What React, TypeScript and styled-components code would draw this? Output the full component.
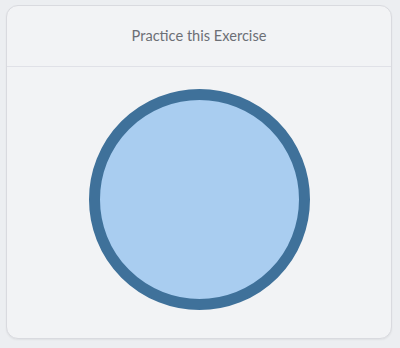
import React from "react";
import styled, { createGlobalStyle } from "styled-components";

const GlobalStyle = createGlobalStyle`
  html, body {
    margin: 0;
    padding: 0;
    background: #eceef1;
  }
  * {
    box-sizing: border-box;
  }
`;

const Page = styled.div`
  width: 400px;
  height: 348px;
  padding: 5px 8px 9px 6px;
`;

const Card = styled.div`
  height: 100%;
  display: flex;
  flex-direction: column;
  background: #f2f3f5;
  border: 1px solid #d9dadf;
  border-radius: 12px;
  box-shadow: 0 1px 2px rgba(0, 0, 0, 0.06);
`;

const Header = styled.div`
  height: 61px;
  display: flex;
  align-items: center;
  justify-content: center;
  border-bottom: 1px solid #e0e1e7;
`;

const Title = styled.h2`
  margin: 0;
  padding-bottom: 1px;
  font-family: Lato, "Open Sans", sans-serif;
  font-size: 14.6px;
  font-weight: 400;
  color: #6c6f75;
`;

const Body = styled.div`
  flex: 1;
  display: flex;
  align-items: center;
  justify-content: center;
  padding-bottom: 6px;
`;

const Circle = styled.div<{ size: number }>`
  width: ${(p) => p.size}px;
  height: ${(p) => p.size}px;
  border-radius: 50%;
  background: #a9cdf0;
  border: 11px solid #3f719a;
`;

export default function App() {
  return (
    <>
      <GlobalStyle />
      <Page>
        <Card>
          <Header>
            <Title>Practice this Exercise</Title>
          </Header>
          <Body>
            <Circle size={221} />
          </Body>
        </Card>
      </Page>
    </>
  );
}
